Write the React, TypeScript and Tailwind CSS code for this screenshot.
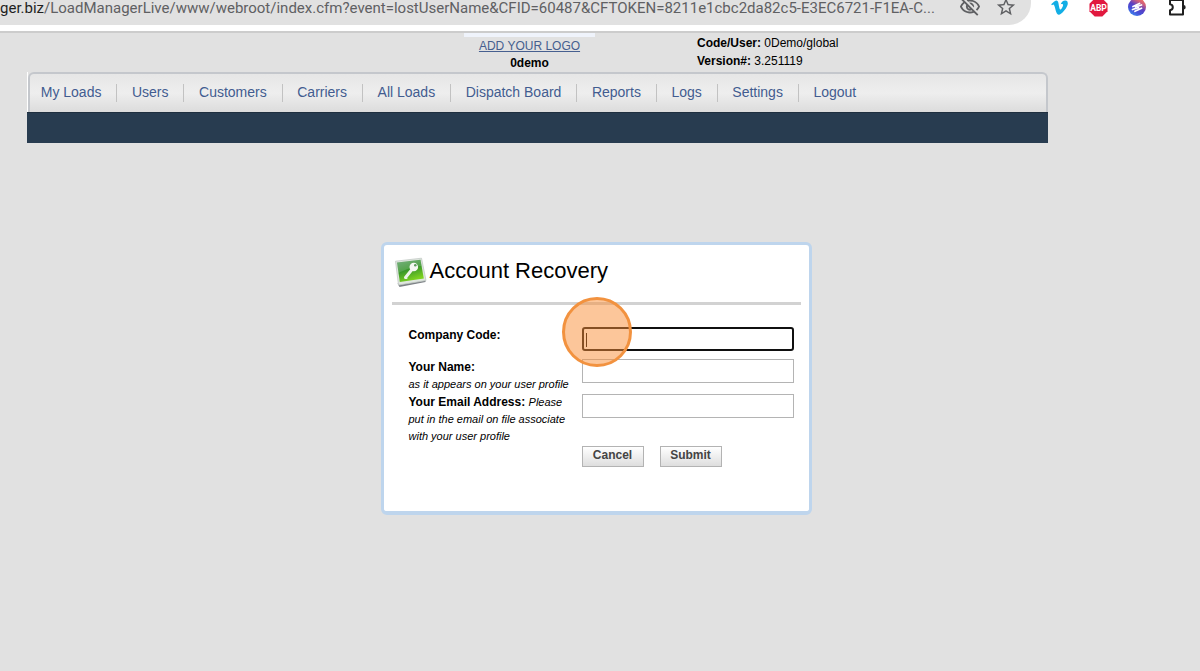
import { MdOutlineVisibilityOff, MdStarBorder } from "react-icons/md";
import { FaVimeoV } from "react-icons/fa";

const navItems = [
    "My Loads",
    "Users",
    "Customers",
    "Carriers",
    "All Loads",
    "Dispatch Board",
    "Reports",
    "Logs",
    "Settings",
    "Logout",
];

function AbpIcon() {
    return (
        <svg width="19" height="19" viewBox="0 0 20 20" aria-hidden="true">
            <path d="M6 .5h8L19.500 6v8L14 19.500H6L.5 14V6z" fill="#e1193f" />
            <text x="10" y="13.4" textAnchor="middle" fontSize="9" fontWeight="700" fill="#fff" fontFamily="Roboto, sans-serif">
                ABP
            </text>
        </svg>
    );
}

function WaveIcon() {
    return (
        <svg width="18" height="18" viewBox="0 0 18 18" aria-hidden="true">
            <defs>
                <linearGradient id="wave" x1="0.85" y1="0" x2="0.25" y2="1">
                    <stop offset="0" stopColor="#ff7452" />
                    <stop offset="0.25" stopColor="#d0607c" />
                    <stop offset="0.5" stopColor="#5a3fc4" />
                    <stop offset="0.75" stopColor="#4552d8" />
                    <stop offset="1" stopColor="#3f8cf0" />
                </linearGradient>
            </defs>
            <circle cx="9" cy="9" r="9" fill="url(#wave)" />
            <g fill="none" stroke="#fff" strokeWidth="1.8" strokeLinecap="round" strokeLinejoin="round">
                <path d="M5 8.500 11.500 5.500M7.500 9 13.500 7" />
                <path d="M4.500 11.500 10.500 9.700M7 13.300 13.500 10.300" />
            </g>
        </svg>
    );
}

function PuzzleIcon() {
    return (
        <svg width="20" height="20" viewBox="0 0 20 20" aria-hidden="true">
            <path
                d="M2 3h13v14.500H2v-4.300c1.700-.2 2.800-1.300 2.800-2.900S3.700 7.500 2 7.300z"
                fill="none"
                stroke="#1f1f1f"
                strokeWidth="2"
                strokeLinejoin="round"
            />
            <path d="M15.500 8a2.200 2.200 0 0 1 0 4.400z" fill="#1f1f1f" />
        </svg>
    );
}

function KeyIcon() {
    return (
        <svg width="32" height="32" viewBox="0 0 32 32" aria-hidden="true">
            <defs>
                <linearGradient id="key-bg" x1="0" y1="0" x2="0.4" y2="1">
                    <stop offset="0" stopColor="#5fa06a" />
                    <stop offset="0.5" stopColor="#35932a" />
                    <stop offset="1" stopColor="#7ed321" />
                </linearGradient>
            </defs>
            <path d="M2.500 26.500 30.500 22.500 30.500 25 4.500 30z" fill="#7d8186" />
            <path d="M.5 4.200 26.500 1.200 31 23.500 3.500 28z" fill="#dfe6df" stroke="#c3cac5" strokeWidth="0.8" />
            <path d="M2 5.500 25.500 2.700 28.800 21.500 4.800 25z" fill="url(#key-bg)" />
            <path d="M2 5.500 25.500 2.700 26.600 9C18 9.500 10 13 3.400 16z" fill="#fff" opacity="0.16" />
            <path d="m10.500 20.500 6.500-8" stroke="#eef4ea" strokeWidth="3" strokeLinecap="round" />
            <path d="m9.500 21.800 3 .2-.8-2.500z" fill="#eef4ea" />
            <circle cx="18.800" cy="10" r="4.300" fill="#f4f8f2" />
            <circle cx="20.300" cy="8.300" r="1.300" fill="#5c9a5c" />
        </svg>
    );
}

function BrowserBar() {
    return (
        <div className="flex h-[31px] items-start overflow-hidden bg-white">
            <div className="flex h-[25px] min-w-0 max-w-[1031px] flex-1 items-start rounded-br-[22px] bg-[#e1e1e1] pr-[14px] text-[#5f6063]">
                <span className="min-w-0 flex-1 whitespace-nowrap font-[Roboto,sans-serif] text-[15px] leading-4">
                    <span className="text-[#1f1f1f]">ger.biz</span>
                    /LoadManagerLive/www/webroot/index.cfm?event=lostUserName&amp;CFID=60487&amp;CFTOKEN=8211e1cbc2da82c5-E3EC6721-F1EA-C...
                </span>
                <button type="button" aria-label="Tracking blocked" className="-mt-1">
                    <MdOutlineVisibilityOff size={22} />
                </button>
                <button type="button" aria-label="Bookmark this page" className="ml-[14px] -mt-1">
                    <MdStarBorder size={22} />
                </button>
            </div>
            <div className="flex shrink-0 items-start gap-5 pl-[19px] pr-[10px]">
                <button type="button" aria-label="Vimeo" className="-mt-[2px]">
                    <FaVimeoV size={19} color="#13aee5" />
                </button>
                <button type="button" aria-label="Adblock Plus" className="-mt-[2px]">
                    <AbpIcon />
                </button>
                <button type="button" aria-label="Recorder" className="-mt-[2px]">
                    <WaveIcon />
                </button>
                <button type="button" aria-label="Extensions" className="-mt-[3px] ml-[2px]">
                    <PuzzleIcon />
                </button>
            </div>
        </div>
    );
}

function Header() {
    return (
        <header className="ml-[27px] max-w-[1021px]">
            <div className="grid h-[39px] grid-cols-[437fr_131px_453fr] text-xs text-black">
                <div className="col-start-2 border-t-4 border-[#eff3fb] text-center">
                    <a href="#logo" className="block leading-[18px] text-[#465f8f] underline">
                        ADD YOUR LOGO
                    </a>
                    <b className="block leading-4">0demo</b>
                </div>
                <div className="pl-[102px] pt-px leading-[18px]">
                    <p>
                        <b>Code/User:</b> 0Demo/global
                    </p>
                    <p>
                        <b>Version#:</b> 3.251119
                    </p>
                </div>
            </div>
            <nav className="border-l border-white">
                <div className="rounded-t-md border-x-2 border-t-2 border-[#c4c7cc] bg-linear-to-b from-[#e6e6e6] via-[#eeeeee] to-[#dcdcdc]">
                    <ul className="flex h-[38px] max-w-[841px] items-center">
                        {navItems.map((item) => (
                            <li key={item} className="group flex flex-auto items-center">
                                <a
                                    href="#nav"
                                    className="flex-auto px-[14px] pb-[3px] text-center text-sm leading-5 text-[#425c90] group-first:pl-[10px]"
                                >
                                    {item}
                                </a>
                                <span className="h-[18px] w-px bg-[#c2c2c2] group-last:hidden" />
                            </li>
                        ))}
                    </ul>
                </div>
            </nav>
            <div className="h-[31px] border-t border-[#1f2f3f] bg-[#283c50]" />
        </header>
    );
}

const inputClass = "block h-6 w-full border border-[#b4b4b4] bg-white px-1 text-xs outline-none";
const buttonClass =
    "h-[21px] w-[62px] border border-[#b3b3b3] bg-linear-to-b from-white to-[#dedede] pb-1 text-xs leading-4 font-bold text-[#444444]";

function RecoveryForm() {
    return (
        <form
            className="mx-auto w-[431px] rounded-md border-[3px] border-b-4 border-[#bed5ed] bg-white px-2 pb-11"
            onSubmit={(e) => e.preventDefault()}
        >
            <div className="flex h-[60px] items-start gap-[3px] border-b-[3px] border-[#d2d2d2] pl-[3px] pt-3">
                <KeyIcon />
                <h1 className="text-[22px] leading-7 text-black">Account Recovery</h1>
            </div>
            <div className="grid grid-cols-[173px_1fr] pl-[17px] pr-[7px] pt-[22px] text-xs leading-[17px] text-black">
                <label htmlFor="company" className="h-8 font-bold">
                    Company Code:
                </label>
                <div className="relative">
                    <input
                        id="company"
                        className="block h-6 w-full rounded-[3px] border-2 border-[#101010] bg-white px-1 caret-transparent outline-none"
                    />
                    <span className="absolute left-1 top-[6px] h-[14px] w-px bg-black" />
                    <span className="pointer-events-none absolute -left-5 -top-[30px] size-[70px] rounded-full border-[3px] border-[#f2923f] bg-[#f98d35]/50" />
                </div>
                <label htmlFor="name" className="h-[35px]">
                    <b>Your Name:</b>
                    <br />
                    <i className="whitespace-nowrap text-[11px]">as it appears on your user profile</i>
                </label>
                <div>
                    <input id="name" className={inputClass} />
                </div>
                <label htmlFor="email" className="pr-2">
                    <b>Your Email Address:</b>{" "}
                    <i className="text-[11px]">Please put in the email on file associate with your user profile</i>
                </label>
                <div>
                    <input id="email" type="email" className={inputClass} />
                    <div className="flex gap-4 pt-7">
                        <button type="button" className={buttonClass}>
                            Cancel
                        </button>
                        <button type="submit" className={buttonClass}>
                            Submit
                        </button>
                    </div>
                </div>
            </div>
        </form>
    );
}

export default function App() {
    return (
        <div className="min-h-screen bg-[#e1e1e1] font-['Liberation_Sans',Arial,sans-serif]">
            <BrowserBar />
            <div className="border-t-2 border-[#cccccc]">
                <Header />
                <main className="pr-2 pt-[99px]">
                    <RecoveryForm />
                </main>
            </div>
        </div>
    );
}
